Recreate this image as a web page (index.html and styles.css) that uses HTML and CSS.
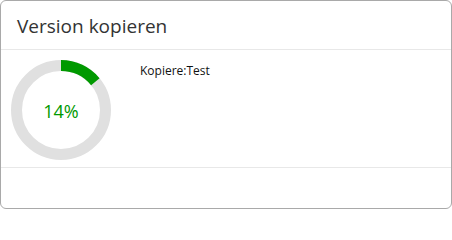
FILE: index.html
```html
<!DOCTYPE html>
<html lang="de">
<head>
<meta charset="utf-8">
<title>Version kopieren</title>
<link rel="stylesheet" href="styles.css">
</head>
<body>
<div class="modal">
  <div class="modal-header">
    <h4 class="modal-title">Version kopieren</h4>
  </div>
  <div class="modal-body">
    <div class="progress-ring">
      <svg width="100" height="100" viewBox="0 0 100 100">
        <circle cx="50" cy="50" r="44.5" fill="none" stroke="#e0e0e0" stroke-width="11"/>
        <circle cx="50" cy="50" r="44.5" fill="none" stroke="#009900" stroke-width="11"
          stroke-dasharray="39.14 300" transform="rotate(-90 50 50)"/>
      </svg>
      <span class="progress-label">14%</span>
    </div>
    <div class="status">Kopiere:Test</div>
  </div>
  <div class="modal-footer"></div>
</div>
</body>
</html>
```
FILE: styles.css
```css
html, body {
  margin: 0;
  padding: 0;
  background: #fff;
}
body {
  font-family: "Open Sans", "Noto Sans", sans-serif;
  color: #333;
}
.modal {
  box-sizing: border-box;
  width: 452px;
  height: 209px;
  background: #fff;
  border: 1px solid #a9a9a9;
  border-radius: 6px;
  display: flex;
  flex-direction: column;
  overflow: hidden;
}
.modal-header {
  padding: 11px 16px 9px;
  border-bottom: 1px solid #e8e8e8;
}
.modal-title {
  margin: 0;
  font-size: 19px;
  font-weight: normal;
  line-height: 28px;
  color: #333;
}
.modal-body {
  display: flex;
  align-items: flex-start;
  padding: 10px 10px 7px;
  height: 100px;
  border-bottom: 1px solid #e8e8e8;
  gap: 29px;
}
.progress-ring {
  position: relative;
  width: 100px;
  height: 100px;
  flex: none;
}
.progress-ring svg {
  display: block;
}
.progress-label {
  position: absolute;
  inset: 0;
  display: flex;
  align-items: center;
  justify-content: center;
  font-size: 18px;
  color: #009900;
  padding-top: 2px;
}
.status {
  font-size: 12px;
  line-height: 17px;
  color: #111;
  margin-top: 2px;
}
.modal-footer {
  flex: 1;
}
```
